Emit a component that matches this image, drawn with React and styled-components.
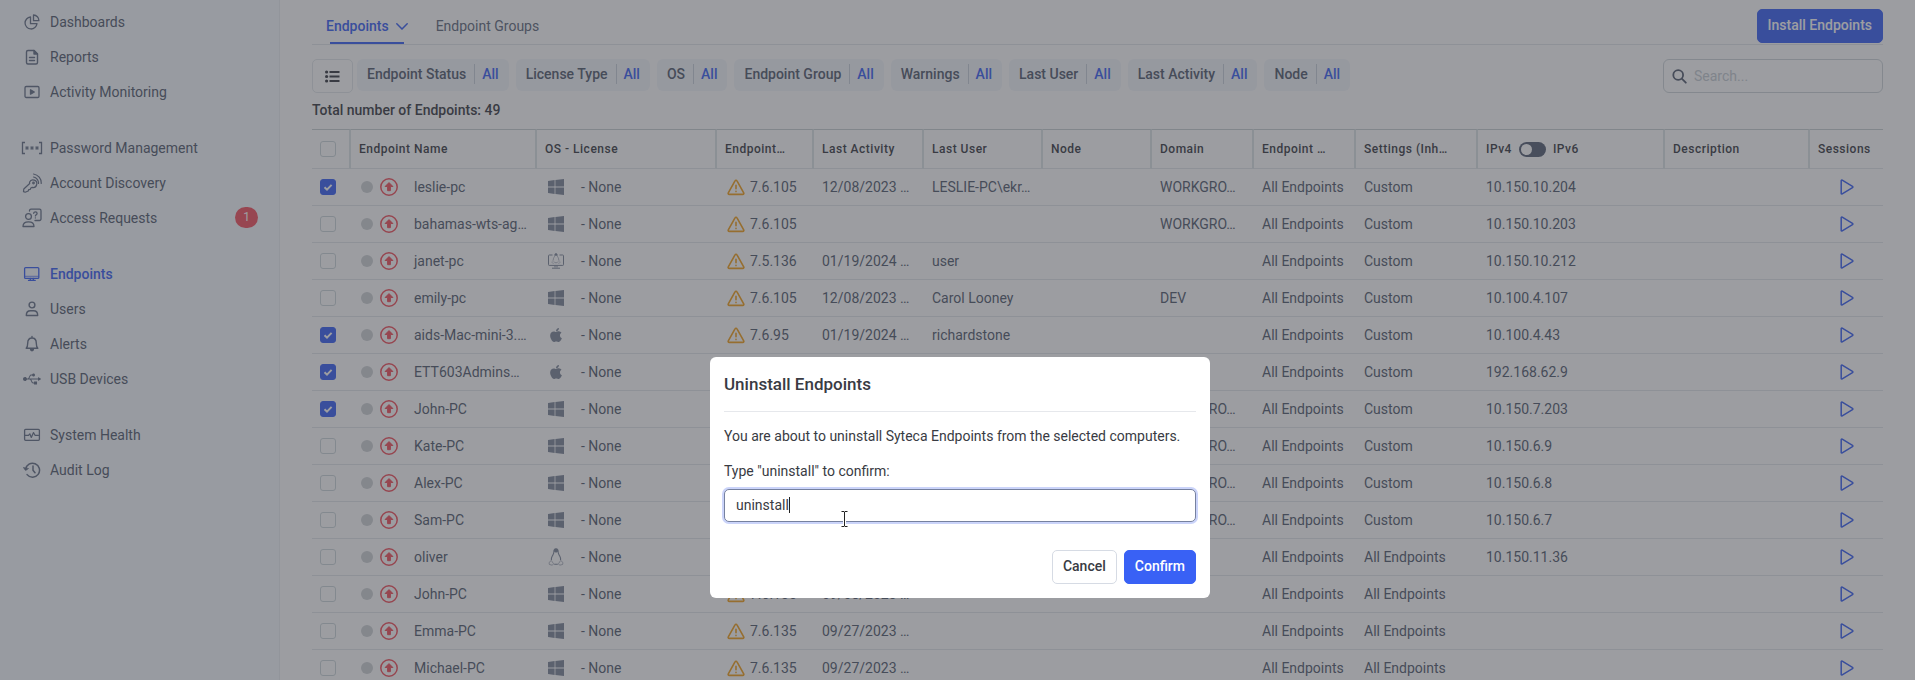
import React, { useState } from 'react';
import styled, { createGlobalStyle } from 'styled-components';
import { FaApple, FaUsb } from 'react-icons/fa';

const GlobalStyle = createGlobalStyle`
    * {
        box-sizing: border-box;
    }
    body {
        margin: 0;
        height: 100vh;
        overflow: hidden;
        background: #ffffff;
        color: #535c6e;
        font-family: Roboto, "Liberation Sans", sans-serif;
        font-size: 14px;
        line-height: 20px;
    }
    button, input {
        font: inherit;
    }
    svg {
        display: block;
        flex-shrink: 0;
    }
`;

/* ---------- icons ---------- */

const Icon = ({ size = 18, box = 18, sw = 1.3, children }) => (
    <svg
        width={size}
        height={size}
        viewBox={`0 0 ${box} ${box}`}
        fill="none"
        stroke="currentColor"
        strokeWidth={sw}
        strokeLinecap="round"
        strokeLinejoin="round"
        aria-hidden="true"
    >
        {children}
    </svg>
);

const PieIcon = () => (
    <Icon>
        <path d="M7.500 4A6 6 0 1 0 14 10.700H7.500z" />
        <path d="M10.500 2v5.700h5.400A5.500 5.500 0 0 0 10.500 2z" />
    </Icon>
);

const ReportIcon = () => (
    <Icon sw={1.4}>
        <path d="M5 2.500h6l3.500 3.500v8.500a1.500 1.500 0 0 1-1.500 1.500H5a1.500 1.500 0 0 1-1.500-1.500V4A1.500 1.500 0 0 1 5 2.500zM6.500 9.500h5M6.500 12.500h5" />
        <path d="M11 2.500V6h3.500z" fill="currentColor" />
    </Icon>
);

const MonitoringIcon = () => (
    <Icon>
        <rect x="2" y="3.500" width="14" height="11" rx="1.200" />
        <path d="M7.500 6.800v4.400l3.800-2.200z" fill="currentColor" />
    </Icon>
);

const PasswordIcon = () => (
    <svg width="22" height="14" viewBox="0 0 22 14" fill="none" stroke="currentColor" strokeWidth="1.3" aria-hidden="true">
        <path d="M4 1.500H1.500v11H4M18 1.500h2.500v11H18" />
        <path
            d="M6 5v4M4.300 6l3.400 2M7.700 6L4.300 8M11 5v4M9.300 6l3.400 2M12.700 6L9.300 8M16 5v4M14.300 6l3.400 2M17.700 6l-3.400 2"
            strokeWidth="1"
        />
    </svg>
);

const DiscoveryIcon = () => (
    <Icon box={20} size={20} sw={1.2}>
        <path d="M7.500 9.200a3.800 3.800 0 1 1 2.700 5.200L8.800 15l-.5 1.300-1.600.4-.5 1.300-3 1.200-1.700-.6.3-2.600 5.900-5.500z" />
        <circle cx="11.500" cy="10" r="0.800" />
        <path d="M11.500 4a6 6 0 0 1 5 6.500M11.500 1a9 9 0 0 1 7.700 9.500" />
    </Icon>
);

const RequestIcon = () => (
    <Icon box={20} size={20}>
        <circle cx="6.500" cy="8.500" r="2.900" />
        <path d="M1 18.500c0-3 2-4.700 5.500-4.700s5.500 1.700 5.500 4.700zM7.500 3V2.500A1.500 1.500 0 0 1 9 1.200h8.500A1.500 1.500 0 0 1 19 2.700V11a1.500 1.500 0 0 1-1.500 1.500H13" />
        <path d="M11.700 5.300c0-1.800 3.400-1.800 3.400.1 0 1.300-1.700 1.300-1.700 2.500M13.400 9.800v.1" />
    </Icon>
);

const EndpointIcon = () => (
    <Icon>
        <rect x="1.600" y="2.600" width="14.200" height="10.800" rx="1" />
        <path d="M2 11.300h13.500" strokeWidth="0.700" />
        <path d="M7.300 13.500v1.600M10.300 13.500v1.600M5.500 15.400h6.700" />
    </Icon>
);

const UserIcon = () => (
    <Icon sw={1.4}>
        <circle cx="9" cy="5" r="2.900" />
        <path d="M3.300 15.500c0-3 1.500-4.700 4.200-4.700h3c2.700 0 4.200 1.700 4.200 4.700z" />
    </Icon>
);

const BellIcon = () => (
    <Icon sw={1.4}>
        <path d="M9 1.500v1.200M3.200 13.200c1.200-1.200 1.500-2.500 1.500-5 0-3.600 1.600-5.200 4.300-5.200s4.300 1.600 4.300 5.200c0 2.500.3 3.800 1.500 5z" />
        <path d="M7.600 14.300a1.400 1.400 0 0 0 2.800 0z" fill="currentColor" />
    </Icon>
);

const HealthIcon = () => (
    <Icon>
        <rect x="1.600" y="3.300" width="14.800" height="11" rx="1" />
        <path d="M2 9.300h3.500l1.300-1.500 1.500 3.700 2.200-5 1.500 2.800h3.500" strokeWidth="1.200" />
    </Icon>
);

const HistoryIcon = () => (
    <Icon sw={1.5}>
        <path d="M2.600 8.300a7 7 0 1 1 1.500 5.300M10 5v4.200l2 2.500" />
        <path d="M.6 6.800l2 2.600 2.600-1.700z" fill="currentColor" strokeWidth="0.800" />
    </Icon>
);

const ChevronIcon = () => (
    <svg width="12" height="7" viewBox="0 0 12 7" fill="none" stroke="currentColor" strokeWidth="1.5" strokeLinecap="round" aria-hidden="true">
        <path d="M.8.8L6 6l5.200-5.200" />
    </svg>
);

const ListIcon = () => (
    <svg width="15" height="13" viewBox="0 0 15 13" fill="currentColor" aria-hidden="true">
        <circle cx="1.600" cy="2" r="1.600" />
        <circle cx="1.600" cy="6.500" r="1.600" />
        <circle cx="1.600" cy="11" r="1.600" />
        <path d="M4.500 1h10v2h-10zM4.500 5.500h10v2h-10zM4.500 10h10v2h-10z" />
    </svg>
);

const SearchIcon = () => (
    <Icon box={15} size={15} sw={1.8}>
        <circle cx="6.200" cy="6" r="4.900" />
        <path d="M9.800 9.700l4 4" />
    </Icon>
);

const ArrowUpIcon = () => (
    <svg width="18" height="18" viewBox="0 0 18 18" fill="none" stroke="#f2505c" aria-hidden="true">
        <circle cx="9" cy="9" r="8.200" strokeWidth="1.500" />
        <path d="M9 4.600l3.900 3.900h-2.500v4.200h-2.800V8.500H5.100z" fill="#f2505c" strokeWidth="1" strokeLinejoin="round" />
    </svg>
);

const WarningIcon = () => (
    <svg width="18" height="17" viewBox="0 0 18 17" fill="none" stroke="#f2a11c" strokeLinecap="round" strokeLinejoin="round" aria-hidden="true">
        <path
            d="M9 1.200c.5 0 .8.200 1 .6l6.700 12c.4.800 0 1.600-.9 1.600H2.200c-.9 0-1.300-.8-.9-1.600l6.700-12c.2-.4.500-.6 1-.6z"
            strokeWidth="1.600"
        />
        <path d="M9 6.200v3.600M9 12.400v.2" strokeWidth="1.600" />
    </svg>
);

const WindowsIcon = () => (
    <svg width="16" height="16" viewBox="0 0 16 16" fill="currentColor" aria-hidden="true">
        <path d="M0 2l6.600-.9v6.500H0zM7.400 1L16 0v7.600H7.400zM0 8.400h6.600v6.500L0 14zM7.400 8.400H16V16l-8.600-1z" />
    </svg>
);

const PenguinShape = () => (
    <>
        <path d="M8 .8c-1.700 0-2.200 1.300-2.100 3 .1 1.600-.6 2.400-1.400 3.800C3.700 9 3.300 10.200 3.400 12M8 .8c1.700 0 2.200 1.300 2.100 3-.1 1.600.6 2.400 1.400 3.800.8 1.400 1.200 2.600 1.100 4.400M6.200 16.200h3.600" />
        <path d="M5.900 3.600C5.800 1.800 6.600.8 8 .8s2.200 1 2.100 2.800L8 4.800z" fill="currentColor" stroke="none" />
        <path d="M3.300 12.400L1 14.600l.4 1.900 3 .7 1.200-1.400zM12.700 12.400l2.300 2.200-.4 1.900-3 .7-1.200-1.400z" strokeWidth="0.600" />
    </>
);

const LinuxIcon = () => (
    <svg width="16" height="18" viewBox="0 0 16 18" fill="none" stroke="currentColor" strokeWidth="1.1" aria-hidden="true">
        <PenguinShape />
    </svg>
);

const LinuxDesktopIcon = () => (
    <svg width="16" height="16" viewBox="0 0 16 16" fill="none" stroke="currentColor" strokeWidth="1" aria-hidden="true">
        <path d="M4.500 2H1.200a.7.700 0 0 0-.7.700v9a.7.700 0 0 0 .7.700h13.600a.7.700 0 0 0 .7-.7v-9a.7.700 0 0 0-.7-.7h-3.300M7 12.500v2M9 12.500v2M4 15.200h8" />
        <g transform="translate(3.200 0) scale(.6)">
            <PenguinShape />
        </g>
    </svg>
);

const PlayIcon = () => (
    <svg width="14" height="16" viewBox="0 0 14 16" fill="none" stroke="currentColor" strokeWidth="1.5" strokeLinejoin="round" aria-hidden="true">
        <path d="M1.200 1.600v12.800c0 .5.500.8 1 .5l10.300-6.200c.5-.3.500-1 0-1.300L2.200 1.100c-.5-.3-1 0-1 .5z" />
    </svg>
);

const BeamIcon = () => (
    <svg width="9" height="18" viewBox="0 0 9 18" fill="none" aria-hidden="true">
        <path d="M2 1.500h2l.5.5.5-.5h2M2 16.500h2l.5-.5.5.5h2M4.500 2v14" stroke="#ffffff" strokeWidth="3" />
        <path d="M1.500 1.500H4l.5.5.5-.5h2.500M1.500 16.500H4l.5-.5.5.5h2.500M4.500 2v14" stroke="#222222" strokeWidth="1" />
    </svg>
);

const osIcons = {
    windows: WindowsIcon,
    apple: () => <FaApple size={16} />,
    linux: LinuxIcon,
    desktop: LinuxDesktopIcon,
};

/* ---------- sidebar ---------- */

const Page = styled.div`
    display: flex;
    height: 100vh;
    overflow: hidden;
`;

const Sidebar = styled.nav`
    display: flex;
    flex-direction: column;
    gap: 21px;
    flex: 0 0 280px;
    padding-top: 4px;
    background: #f7fafe;
    border-right: 1px solid #ebeef2;
`;

const NavGroup = styled.div`
    display: flex;
    flex-direction: column;
`;

const NavLink = styled.a`
    display: flex;
    align-items: center;
    height: 35px;
    padding: 0 21px 0 14px;
    color: ${(props) => (props.$active ? '#3961f5' : '#535c6e')};
    font-weight: ${(props) => (props.$active ? 500 : 400)};
    text-decoration: none;
`;

const NavIcon = styled.span`
    display: flex;
    justify-content: center;
    width: 36px;
    color: ${(props) => (props.$active ? '#3961f5' : '#647086')};
`;

const Badge = styled.span`
    width: 23px;
    height: 21px;
    margin-left: auto;
    border-radius: 11px;
    background: #f5505e;
    color: #ffffff;
    font-size: 12px;
    text-align: center;
`;

/* ---------- top part of the page ---------- */

const Main = styled.main`
    flex: 1;
    min-width: 0;
    padding: 0 32px;
`;

const TabBar = styled.div`
    display: flex;
    align-items: stretch;
    gap: 28px;
    height: 45px;
    padding-left: 14px;
    border-bottom: 1px solid #e2e7ea;
`;

const Tab = styled.a`
    display: flex;
    align-items: center;
    gap: 7px;
    padding-top: 8px;
    color: ${(props) => (props.$active ? '#3961f5' : '#616a7c')};
    font-weight: ${(props) => (props.$active ? 500 : 400)};
    text-decoration: none;
    background: ${(props) =>
        props.$active ? 'linear-gradient(#3961f5, #3961f5) center bottom / calc(100% - 8px) 2px no-repeat' : 'none'};
`;

const Button = styled.button`
    height: 34px;
    padding: 0 10px 2px;
    border: 1px solid ${(props) => (props.$primary ? '#3961f5' : '#d6dbe4')};
    border-radius: 5px;
    background: ${(props) => (props.$primary ? '#3961f5' : '#ffffff')};
    color: ${(props) => (props.$primary ? '#ffffff' : '#393b43')};
    font-weight: 500;
    cursor: pointer;
`;

const InstallButton = styled(Button)`
    margin: 9px 0 0 auto;
`;

const Filters = styled.div`
    display: flex;
    align-items: flex-start;
    gap: 7px;
    margin-top: 14px;
`;

const ListButton = styled(Button)`
    display: flex;
    align-items: center;
    justify-content: center;
    width: 41px;
    margin-right: -3px;
    padding: 0;
    border-color: #e2e7ea;
`;

const Chip = styled.button`
    display: flex;
    align-items: center;
    height: 32px;
    padding: 0 10px 2px;
    border: 0;
    border-radius: 6px;
    background: #f3f6fb;
    color: #535c6e;
    font-weight: 500;
    white-space: nowrap;
    cursor: pointer;
`;

const ChipValue = styled.span`
    margin-left: 8px;
    padding-left: 7px;
    border-left: 1px solid #c9d0da;
    color: #3961f5;
`;

const SearchBox = styled.label`
    display: flex;
    align-items: center;
    gap: 7px;
    width: 220px;
    height: 34px;
    margin-left: auto;
    padding: 0 8px;
    border: 1px solid #ced5d9;
    border-radius: 6px;
`;

const SearchInput = styled.input`
    flex: 1;
    min-width: 0;
    padding: 0;
    border: 0;
    outline: 0;
    background: none;
    &::placeholder {
        color: #c5ccd2;
        opacity: 1;
    }
`;

const Total = styled.div`
    margin: 7px 0 9px;
    color: #393b43;
    font-weight: 500;
`;

/* ---------- table ---------- */

const Table = styled.table`
    width: 100%;
    table-layout: fixed;
    border-collapse: separate;
    border-spacing: 0;
`;

const Th = styled.th`
    height: 40px;
    padding: 0 8px;
    border-top: 1px solid #c8d0d3;
    border-right: 2px solid #dde5e6;
    border-bottom: 1px solid #e2e7ea;
    color: #393b43;
    font-size: 12px;
    font-weight: 500;
    letter-spacing: 0.5px;
    text-align: left;
    white-space: nowrap;
    &:last-child {
        border-right: 0;
    }
`;

const Td = styled.td`
    height: 37px;
    padding: 0 8px;
    border-bottom: 1px solid #e2e7ea;
    overflow: hidden;
    white-space: nowrap;
`;

const CellFlex = styled.div`
    display: flex;
    align-items: center;
    gap: ${(props) => props.$gap}px;
    padding-left: ${(props) => props.$indent || 0}px;
`;

const Dot = styled.span`
    width: 12px;
    height: 12px;
    border-radius: 50%;
    background: #cfd3d5;
`;

const NameText = styled.span`
    margin-left: 9px;
`;

const OsIcon = styled.span`
    display: flex;
    justify-content: center;
    width: 18px;
    color: #7d8799;
`;

const Checkbox = styled.input`
    display: block;
    appearance: none;
    width: 16px;
    height: 16px;
    margin: 0;
    border: 1px solid #ccd6da;
    border-radius: 3px;
    background: #ffffff;
    &:checked {
        border-color: #3961f5;
        background: #3961f5
            url("data:image/svg+xml,%3Csvg xmlns='http://www.w3.org/2000/svg' viewBox='0 0 14 14'%3E%3Cpath d='M3.500 7.200l2.500 2.400 4.600-4.700' fill='none' stroke='white' stroke-width='2'/%3E%3C/svg%3E")
            center / 14px 14px no-repeat;
    }
`;

const Switch = styled.input`
    appearance: none;
    width: 27px;
    height: 15px;
    margin: 0;
    padding: 2px;
    border-radius: 8px;
    background: #566074;
    &::before {
        content: '';
        display: block;
        width: 11px;
        height: 11px;
        border-radius: 50%;
        background: #ffffff;
    }
    &:checked::before {
        margin-left: 12px;
    }
`;

const PlayButton = styled.button`
    display: block;
    margin: 0 auto;
    padding: 0;
    border: 0;
    background: none;
    color: #3961f5;
    cursor: pointer;
`;

/* ---------- dialog ---------- */

const Backdrop = styled.div`
    position: fixed;
    inset: 0;
    display: flex;
    justify-content: center;
    align-items: flex-start;
    padding: 357px 0 0 5px;
    background: rgba(57, 59, 67, 0.5);
`;

const Dialog = styled.form`
    width: 500px;
    padding: 14px;
    border-radius: 6px;
    background: #ffffff;
    color: #393b43;
`;

const DialogTitle = styled.h2`
    margin: 0 0 14px;
    padding-bottom: 14px;
    border-bottom: 1px solid #e6e8ec;
    font-size: 17px;
    font-weight: 500;
    line-height: 26px;
`;

const DialogText = styled.p`
    margin: 0 0 15px;
`;

const DialogLabel = styled.label`
    display: block;
    margin-bottom: 8px;
`;

const Field = styled.div`
    position: relative;
`;

const ConfirmInput = styled.input`
    display: block;
    width: 100%;
    height: 33px;
    padding: 0 11px 2px;
    border: 1px solid #76819f;
    border-radius: 5px;
    outline: 0;
    color: #393b43;
    box-shadow: 0 0 0 2px #cbd4fa;
    caret-color: transparent;
`;

/* text bar and mouse pointer lie over the text box */
const Caret = styled.span`
    position: absolute;
    top: 8px;
    left: 65px;
    width: 1px;
    height: 16px;
    background: #222222;
`;

const Pointer = styled.span`
    position: absolute;
    top: 21px;
    left: 116px;
`;

const DialogButtons = styled.div`
    display: flex;
    justify-content: flex-end;
    gap: 7px;
    margin-top: 28px;
`;

/* ---------- data ---------- */

const navGroups = [
    [
        { label: 'Dashboards', icon: PieIcon },
        { label: 'Reports', icon: ReportIcon },
        { label: 'Activity Monitoring', icon: MonitoringIcon },
    ],
    [
        { label: 'Password Management', icon: PasswordIcon },
        { label: 'Account Discovery', icon: DiscoveryIcon },
        { label: 'Access Requests', icon: RequestIcon, badge: 1 },
    ],
    [
        { label: 'Endpoints', icon: EndpointIcon, active: true },
        { label: 'Users', icon: UserIcon },
        { label: 'Alerts', icon: BellIcon },
        { label: 'USB Devices', icon: () => <FaUsb size={18} /> },
    ],
    [
        { label: 'System Health', icon: HealthIcon },
        { label: 'Audit Log', icon: HistoryIcon },
    ],
];

const filters = ['Endpoint Status', 'License Type', 'OS', 'Endpoint Group', 'Warnings', 'Last User', 'Last Activity', 'Node'];

/* the Description column takes the width that is left */
const columnWidths = [39, 186, 180, 97, 110, 119, 109, 102, 102, 122, 187, null, 73];

// name, os, version, last activity, last user, domain, settings, ip, checked
const endpoints = [
    ['leslie-pc', 'windows', '7.6.105', '12/08/2023 …', 'LESLIE-PC\\ekr…', 'WORKGRO…', 'Custom', '10.150.10.204', true],
    ['bahamas-wts-ag…', 'windows', '7.6.105', '', '', 'WORKGRO…', 'Custom', '10.150.10.203', false],
    ['janet-pc', 'desktop', '7.5.136', '01/19/2024 …', 'user', '', 'Custom', '10.150.10.212', false],
    ['emily-pc', 'windows', '7.6.105', '12/08/2023 …', 'Carol Looney', 'DEV', 'Custom', '10.100.4.107', false],
    ['aids-Mac-mini-3.…', 'apple', '7.6.95', '01/19/2024 …', 'richardstone', '', 'Custom', '10.100.4.43', true],
    ['ETT603Admins…', 'apple', '', '', '', '', 'Custom', '192.168.62.9', true],
    ['John-PC', 'windows', '', '', '', 'WORKGRO…', 'Custom', '10.150.7.203', true],
    ['Kate-PC', 'windows', '', '', '', 'WORKGRO…', 'Custom', '10.150.6.9', false],
    ['Alex-PC', 'windows', '', '', '', 'WORKGRO…', 'Custom', '10.150.6.8', false],
    ['Sam-PC', 'windows', '', '', '', 'WORKGRO…', 'Custom', '10.150.6.7', false],
    ['oliver', 'linux', '', '', '', '', 'All Endpoints', '10.150.11.36', false],
    ['John-PC', 'windows', '7.6.135', '09/08/2023 …', '', '', 'All Endpoints', '', false],
    ['Emma-PC', 'windows', '7.6.135', '09/27/2023 …', '', '', 'All Endpoints', '', false],
    ['Michael-PC', 'windows', '7.6.135', '09/27/2023 …', '', '', 'All Endpoints', '', false],
];

const EndpointRow = ({ data }) => {
    const [name, os, version, activity, user, domain, settings, ip, selected] = data;
    const [checked, setChecked] = useState(selected);
    const Os = osIcons[os];
    return (
        <tr>
            <Td>
                <Checkbox type="checkbox" aria-label={name} checked={checked} onChange={() => setChecked(!checked)} />
            </Td>
            <Td>
                <CellFlex $gap={7} $indent={2}>
                    <Dot />
                    <ArrowUpIcon />
                    <NameText>{name}</NameText>
                </CellFlex>
            </Td>
            <Td>
                <CellFlex $gap={16} $indent={2}>
                    <OsIcon>
                        <Os />
                    </OsIcon>
                    <span>- None</span>
                </CellFlex>
            </Td>
            <Td>
                {version && (
                    <CellFlex $gap={5} $indent={2}>
                        <WarningIcon />
                        <span>{version}</span>
                    </CellFlex>
                )}
            </Td>
            <Td>{activity}</Td>
            <Td>{user}</Td>
            <Td />
            <Td>{domain}</Td>
            <Td>All Endpoints</Td>
            <Td>{settings}</Td>
            <Td>{ip}</Td>
            <Td />
            <Td>
                <PlayButton type="button" aria-label={`Play ${name}`}>
                    <PlayIcon />
                </PlayButton>
            </Td>
        </tr>
    );
};

const UninstallDialog = () => {
    const [value, setValue] = useState('uninstall');
    return (
        <Backdrop>
            <Dialog role="dialog" aria-labelledby="dialog-title" onSubmit={(e) => e.preventDefault()}>
                <DialogTitle id="dialog-title">Uninstall Endpoints</DialogTitle>
                <DialogText>You are about to uninstall Syteca Endpoints from the selected computers.</DialogText>
                <DialogLabel htmlFor="confirm-text">Type "uninstall" to confirm:</DialogLabel>
                <Field>
                    <ConfirmInput id="confirm-text" type="text" value={value} onChange={(e) => setValue(e.target.value)} />
                    <Caret />
                    <Pointer>
                        <BeamIcon />
                    </Pointer>
                </Field>
                <DialogButtons>
                    <Button type="button">Cancel</Button>
                    <Button type="submit" $primary>
                        Confirm
                    </Button>
                </DialogButtons>
            </Dialog>
        </Backdrop>
    );
};

const App = () => {
    return (
        <>
            <GlobalStyle />
            <Page>
                <Sidebar>
                    {navGroups.map((group) => (
                        <NavGroup key={group[0].label}>
                            {group.map(({ label, icon: ItemIcon, active, badge }) => (
                                <NavLink key={label} href="#" $active={active}>
                                    <NavIcon $active={active}>
                                        <ItemIcon />
                                    </NavIcon>
                                    {label}
                                    {badge && <Badge>{badge}</Badge>}
                                </NavLink>
                            ))}
                        </NavGroup>
                    ))}
                </Sidebar>
                <Main>
                    <TabBar>
                        <Tab href="#" $active>
                            Endpoints
                            <ChevronIcon />
                        </Tab>
                        <Tab href="#">Endpoint Groups</Tab>
                        <InstallButton type="button" $primary>
                            Install Endpoints
                        </InstallButton>
                    </TabBar>
                    <Filters>
                        <ListButton type="button" aria-label="Columns">
                            <ListIcon />
                        </ListButton>
                        {filters.map((name) => (
                            <Chip key={name} type="button">
                                {name}
                                <ChipValue>All</ChipValue>
                            </Chip>
                        ))}
                        <SearchBox>
                            <SearchIcon />
                            <SearchInput type="text" placeholder="Search..." aria-label="Search" />
                        </SearchBox>
                    </Filters>
                    <Total>Total number of Endpoints: 49</Total>
                    <Table>
                        <colgroup>
                            {columnWidths.map((width, i) => (
                                <col key={i} width={width || undefined} />
                            ))}
                        </colgroup>
                        <thead>
                            <tr>
                                <Th>
                                    <Checkbox type="checkbox" aria-label="Select all" />
                                </Th>
                                <Th>Endpoint Name</Th>
                                <Th>OS - License</Th>
                                <Th>Endpoint…</Th>
                                <Th>Last Activity</Th>
                                <Th>Last User</Th>
                                <Th>Node</Th>
                                <Th>Domain</Th>
                                <Th>Endpoint …</Th>
                                <Th>Settings (Inh…</Th>
                                <Th>
                                    <CellFlex $gap={7}>
                                        IPv4
                                        <Switch type="checkbox" aria-label="Show IPv6" />
                                        IPv6
                                    </CellFlex>
                                </Th>
                                <Th>Description</Th>
                                <Th>Sessions</Th>
                            </tr>
                        </thead>
                        <tbody>
                            {endpoints.map((data, i) => (
                                <EndpointRow key={i} data={data} />
                            ))}
                        </tbody>
                    </Table>
                </Main>
            </Page>
            <UninstallDialog />
        </>
    );
};

export default App;
